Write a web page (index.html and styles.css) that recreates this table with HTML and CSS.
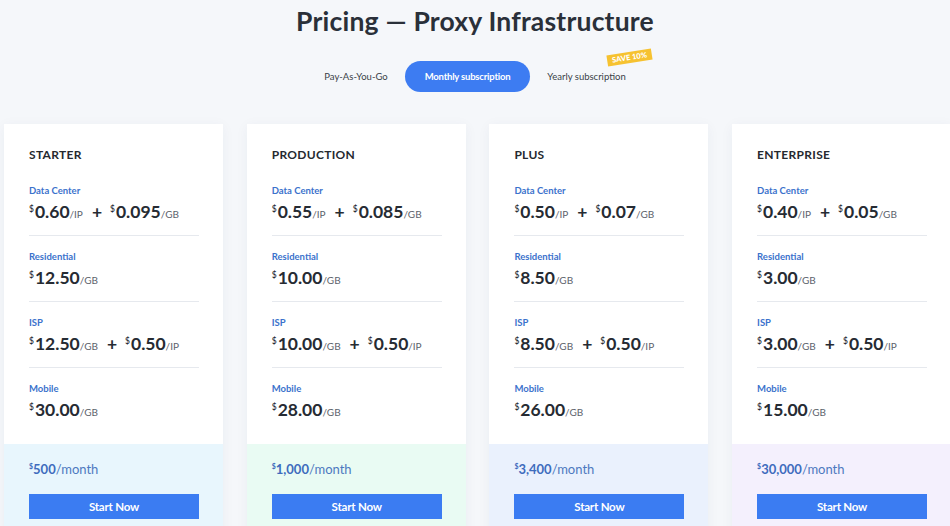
FILE: index.html
```html
<!DOCTYPE html>
<html>
<head>
<meta charset="utf-8">
<link rel="stylesheet" href="styles.css">
</head>
<body>
<div class="page">
  <h1 class="title">Pricing — Proxy Infrastructure</h1>
  <div class="toggle">
    <span class="opt">Pay-As-You-Go</span>
    <span class="opt active">Monthly subscription</span>
    <span class="opt yearly">Yearly subscription<span class="badge">SAVE 10%</span></span>
  </div>
  <div class="cards">
    <div class="card">
      <div class="card-body">
        <div class="plan">STARTER</div>
        <div class="sec"><div class="lbl">Data Center</div><div class="price"><sup>$</sup>0.60<small>/IP</small><span class="plus">+</span><sup>$</sup>0.095<small>/GB</small></div></div>
        <div class="sec"><div class="lbl">Residential</div><div class="price"><sup>$</sup>12.50<small>/GB</small></div></div>
        <div class="sec"><div class="lbl">ISP</div><div class="price"><sup>$</sup>12.50<small>/GB</small><span class="plus">+</span><sup>$</sup>0.50<small>/IP</small></div></div>
        <div class="sec last"><div class="lbl">Mobile</div><div class="price"><sup>$</sup>30.00<small>/GB</small></div></div>
      </div>
      <div class="card-foot cyan">
        <div class="month"><sup>$</sup><b>500</b>/month</div>
        <button class="btn">Start Now</button>
      </div>
    </div>
    <div class="card">
      <div class="card-body">
        <div class="plan">PRODUCTION</div>
        <div class="sec"><div class="lbl">Data Center</div><div class="price"><sup>$</sup>0.55<small>/IP</small><span class="plus">+</span><sup>$</sup>0.085<small>/GB</small></div></div>
        <div class="sec"><div class="lbl">Residential</div><div class="price"><sup>$</sup>10.00<small>/GB</small></div></div>
        <div class="sec"><div class="lbl">ISP</div><div class="price"><sup>$</sup>10.00<small>/GB</small><span class="plus">+</span><sup>$</sup>0.50<small>/IP</small></div></div>
        <div class="sec last"><div class="lbl">Mobile</div><div class="price"><sup>$</sup>28.00<small>/GB</small></div></div>
      </div>
      <div class="card-foot mint">
        <div class="month"><sup>$</sup><b>1,000</b>/month</div>
        <button class="btn">Start Now</button>
      </div>
    </div>
    <div class="card">
      <div class="card-body">
        <div class="plan">PLUS</div>
        <div class="sec"><div class="lbl">Data Center</div><div class="price"><sup>$</sup>0.50<small>/IP</small><span class="plus">+</span><sup>$</sup>0.07<small>/GB</small></div></div>
        <div class="sec"><div class="lbl">Residential</div><div class="price"><sup>$</sup>8.50<small>/GB</small></div></div>
        <div class="sec"><div class="lbl">ISP</div><div class="price"><sup>$</sup>8.50<small>/GB</small><span class="plus">+</span><sup>$</sup>0.50<small>/IP</small></div></div>
        <div class="sec last"><div class="lbl">Mobile</div><div class="price"><sup>$</sup>26.00<small>/GB</small></div></div>
      </div>
      <div class="card-foot blue">
        <div class="month"><sup>$</sup><b>3,400</b>/month</div>
        <button class="btn">Start Now</button>
      </div>
    </div>
    <div class="card">
      <div class="card-body">
        <div class="plan">ENTERPRISE</div>
        <div class="sec"><div class="lbl">Data Center</div><div class="price"><sup>$</sup>0.40<small>/IP</small><span class="plus">+</span><sup>$</sup>0.05<small>/GB</small></div></div>
        <div class="sec"><div class="lbl">Residential</div><div class="price"><sup>$</sup>3.00<small>/GB</small></div></div>
        <div class="sec"><div class="lbl">ISP</div><div class="price"><sup>$</sup>3.00<small>/GB</small><span class="plus">+</span><sup>$</sup>0.50<small>/IP</small></div></div>
        <div class="sec last"><div class="lbl">Mobile</div><div class="price"><sup>$</sup>15.00<small>/GB</small></div></div>
      </div>
      <div class="card-foot lilac">
        <div class="month"><sup>$</sup><b>30,000</b>/month</div>
        <button class="btn">Start Now</button>
      </div>
    </div>
  </div>
</div>
</body>
</html>
```
FILE: styles.css
```css
* { box-sizing: border-box; }
html, body { margin: 0; padding: 0; }
body {
  background: #f5f7fa;
  font-family: Lato, "Open Sans", sans-serif;
  color: #262b33;
  width: 950px;
  height: 526px;
  overflow: hidden;
}
.page { display: flex; flex-direction: column; align-items: center; }
.title {
  margin: 5px 0 0;
  font-size: 26.5px;
  font-weight: 700;
  color: #2a3039;
  line-height: 32px;
  letter-spacing: 0.2px;
}
.toggle {
  margin-top: 24px;
  display: flex;
  align-items: center;
  gap: 17px;
  font-size: 9.5px;
  color: #3a3f47;
}
.opt { display: inline-block; line-height: 31px; }
.opt.active {
  background: #3d7cf2;
  color: #fff;
  font-weight: 700;
  border-radius: 16px;
  padding: 0 20px;
  letter-spacing: -0.2px;
}
.yearly { position: relative; }
.badge {
  position: absolute;
  left: 60px;
  top: -9px;
  background: #f6c230;
  color: #fff;
  font-size: 7.5px;
  font-weight: 900;
  line-height: 11px;
  padding: 0 5px;
  transform: rotate(-9deg);
  white-space: nowrap;
}
.cards {
  align-self: stretch;
  margin-top: 32px;
  padding-left: 4px;
  display: flex;
  gap: 23.7px;
}
.card {
  flex: 0 0 219px;
  background: #fff;
  box-shadow: 0 2px 12px rgba(30, 50, 90, 0.05);
  display: flex;
  flex-direction: column;
}
.card-body { padding: 23px 24px 0 25px; }
.plan {
  font-size: 12px;
  font-weight: 700;
  letter-spacing: 0.3px;
  line-height: 16px;
  color: #25292f;
  margin-bottom: 22px;
}
.sec {
  padding: 0 0 13px;
  border-bottom: 1px solid #e6e9ee;
  margin-bottom: 15px;
}
.sec.last { border-bottom: 0; margin-bottom: 0; padding-bottom: 24px; }
.lbl {
  font-size: 9.5px;
  font-weight: 700;
  color: #3b72cc;
  line-height: 12px;
  margin-bottom: 5px;
}
.price {
  font-size: 17.5px;
  font-weight: 700;
  color: #262b33;
  line-height: 20px;
  height: 20px;
  white-space: nowrap;
}
.price sup {
  font-size: 8.5px;
  font-weight: 500;
  line-height: 0;
  vertical-align: 6px;
  margin-right: 1px;
}
.price small {
  font-size: 10px;
  font-weight: 400;
  color: #5c626b;
}
.plus { margin: 0 8px 0 9px; font-weight: 700; }
.card-foot {
  flex: 1;
  padding: 18px 24px 20px 25px;
}
.cyan { background: #e8f6fd; }
.mint { background: #e9fbf3; }
.blue { background: #eaf1fd; }
.lilac { background: #f4f0fd; }
.month {
  font-size: 13px;
  color: #4d79c0;
  line-height: 15px;
  height: 15px;
}
.month b { font-weight: 700; color: #3e6cbd; }
.month sup {
  font-size: 7px;
  font-weight: 700;
  line-height: 0;
  vertical-align: 5px;
  color: #3e6cbd;
}
.btn {
  margin-top: 17px;
  display: block;
  width: 100%;
  height: 25px;
  border: 0;
  background: #3b7cf2;
  color: #fff;
  font-family: Lato, sans-serif;
  font-weight: 700;
  font-size: 11.5px;
  letter-spacing: -0.2px;
  padding: 0;
}
```
